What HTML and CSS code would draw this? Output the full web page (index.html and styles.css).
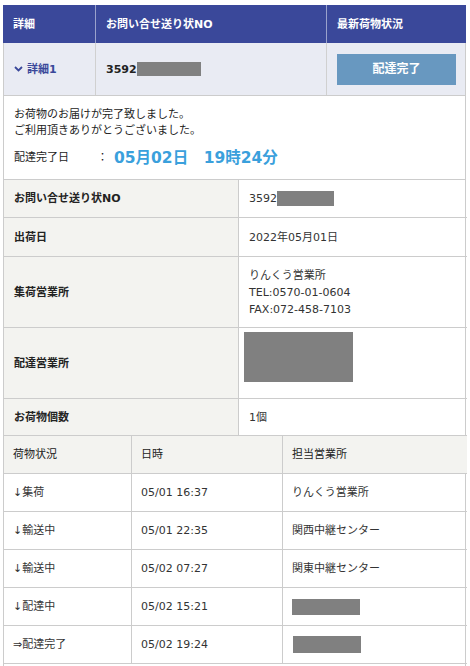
FILE: index.html
```html
<!DOCTYPE html>
<html lang="ja">
<head>
<meta charset="utf-8">
<title>お荷物状況</title>
<link rel="stylesheet" href="styles.css">
</head>
<body>
<div class="wrap">
  <div class="sum sum-head">
    <div class="cell">詳細</div>
    <div class="cell sep">お問い合せ送り状NO</div>
    <div class="cell sep">最新荷物状況</div>
  </div>
  <div class="sum sum-row">
    <div class="cell first toggle">
      <svg class="chev" width="9" height="6" viewBox="0 0 9 6"><polyline points="1,1 4.5,4.5 8,1" fill="none" stroke="#3a489a" stroke-width="1.8"/></svg>
      <span>詳細1</span>
    </div>
    <div class="cell sep no"><span>3592</span><span class="mask mask-head"></span></div>
    <div class="cell sep last"><span class="btn">配達完了</span></div>
  </div>
  <div class="message">
    <p>お荷物のお届けが完了致しました。<br>ご利用頂きありがとうございました。</p>
    <p class="date"><span class="date-label">配達完了日</span><span class="colon">：</span><span class="date-value">05月02日　19時24分</span></p>
  </div>
  <div class="detail">
    <div class="dl">お問い合せ送り状NO</div>
    <div class="dv"><span>3592</span><span class="mask mask-no"></span></div>
    <div class="dl">出荷日</div>
    <div class="dv">2022年05月01日</div>
    <div class="dl">集荷営業所</div>
    <div class="dv">りんくう営業所<br>TEL:0570-01-0604<br>FAX:072-458-7103</div>
    <div class="dl">配達営業所</div>
    <div class="dv dv-top"><span class="mask mask-big"></span></div>
    <div class="dl">お荷物個数</div>
    <div class="dv">1個</div>
  </div>
  <div class="status">
    <div class="sh">荷物状況</div>
    <div class="sh">日時</div>
    <div class="sh">担当営業所</div>
    <div class="sc">↓集荷</div>
    <div class="sc">05/01 16:37</div>
    <div class="sc">りんくう営業所</div>
    <div class="sc">↓輸送中</div>
    <div class="sc">05/01 22:35</div>
    <div class="sc">関西中継センター</div>
    <div class="sc">↓輸送中</div>
    <div class="sc">05/02 07:27</div>
    <div class="sc">関東中継センター</div>
    <div class="sc">↓配達中</div>
    <div class="sc">05/02 15:21</div>
    <div class="sc"><span class="mask mask-row"></span></div>
    <div class="sc">⇒配達完了</div>
    <div class="sc">05/02 19:24</div>
    <div class="sc"><span class="mask mask-row mask-row2"></span></div>
  </div>
  <div class="more"></div>
</div>
</body>
</html>
```

FILE: styles.css
```css
* { box-sizing: border-box; }
html, body { margin: 0; padding: 0; background: #fff; }
body {
  font-family: "DejaVu Sans", "Noto Sans CJK JP", sans-serif;
  font-size: 11px;
  line-height: 17px;
  color: #333;
}
.wrap {
  margin: 5px 0 0 3px;
  width: 463px;
}
.sum {
  display: grid;
  grid-template-columns: 92px 231px 140px;
}
.cell {
  display: flex;
  align-items: center;
  padding-left: 10px;
}
.sum-head {
  height: 38px;
  background: #3a489a;
  color: #fff;
  font-weight: bold;
}
.sum-head .sep { border-left: 1px solid #9aa2cc; }
.sum-row {
  height: 53px;
  background: #e9ebf3;
  border-bottom: 1px solid #ccc;
}
.sum-row .sep { border-left: 1px solid #d0d0d0; }
.sum-row .first { border-left: 1px solid #ccc; }
.sum-row .last { border-right: 1px solid #ccc; padding-right: 9px; }
.toggle { color: #3a489a; font-weight: bold; gap: 4px; }
.chev { display: block; }
.no { font-weight: bold; color: #222; }
.mask { display: inline-block; background: #808080; }
.mask-head { width: 64px; height: 14px; }
.btn {
  display: flex;
  align-items: center;
  justify-content: center;
  width: 119px;
  height: 31px;
  background: #6898c0;
  color: #fff;
  font-weight: bold;
  font-size: 12px;
}
.message {
  border-left: 1px solid #ccc;
  border-right: 1px solid #ccc;
  border-bottom: 1px solid #ccc;
  padding: 11px 10px 0 10px;
  height: 84px;
}
.message p { margin: 0; line-height: 16px; color: #222; }
.message .date {
  display: flex;
  align-items: center;
  margin-top: 7px;
  line-height: 24px;
}
.date-label { width: 83px; }
.colon { width: 17px; }
.date-value {
  color: #3aa0dc;
  font-weight: bold;
  font-size: 15.5px;
}
.detail {
  display: grid;
  grid-template-columns: 234px 229px;
  grid-template-rows: 38px 39px 71px 71px 37px;
  border-left: 1px solid #ccc;
  border-right: 1px solid #ccc;
}
.dl, .dv {
  border-bottom: 1px solid #ccc;
  padding: 0 10px;
  display: flex;
  align-items: center;
}
.dl {
  background: #f3f3f0;
  font-weight: bold;
  color: #222;
}
.dv {
  border-left: 1px solid #ccc;
  display: flex;
  flex-wrap: wrap;
  align-content: center;
}
.mask-no { width: 57px; height: 15px; }
.dv-top { align-content: flex-start; padding: 4px 0 0 5px; }
.mask-big { display: block; width: 109px; height: 50px; }
.status {
  display: grid;
  grid-template-columns: 127px 151px 185px;
  border-left: 1px solid #ccc;
  border-right: 1px solid #ccc;
}
.sh, .sc {
  height: 38px;
  display: flex;
  align-items: center;
  padding-left: 9px;
  border-bottom: 1px solid #ccc;
}
.sh:nth-child(3n+2), .sh:nth-child(3n),
.sc:nth-child(3n+2), .sc:nth-child(3n) {
  border-left: 1px solid #ccc;
}
.sh { background: #f3f3f0; color: #222; }
.mask-row { width: 68px; height: 16px; }
.mask-row2 { height: 17px; margin-left: 1px; }
.more {
  height: 20px;
  border-left: 1px solid #ccc;
  border-right: 1px solid #ccc;
}
```
